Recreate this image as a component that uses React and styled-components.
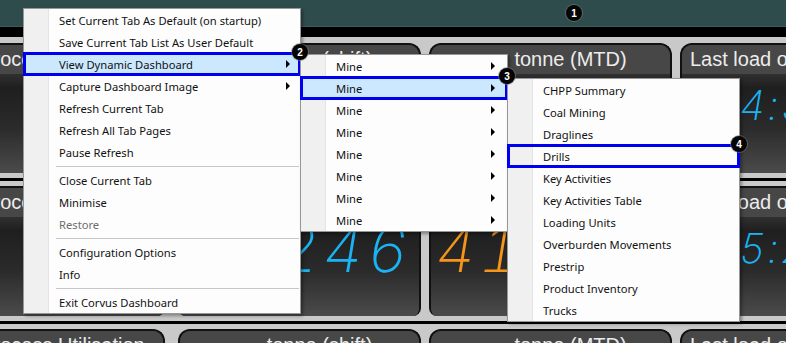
import React from "react";
import styled, { createGlobalStyle } from "styled-components";

const GlobalStyle = createGlobalStyle`
  html, body {
    margin: 0;
    padding: 0;
  }
  body {
    background: #c9c9c9;
    overflow: hidden;
  }
`;

const mainItems = [
  { label: "Set Current Tab As Default (on startup)" },
  { label: "Save Current Tab List As User Default" },
  { label: "View Dynamic Dashboard", sub: true, active: true, marked: "2" },
  { label: "Capture Dashboard Image", sub: true },
  { label: "Refresh Current Tab" },
  { label: "Refresh All Tab Pages" },
  { label: "Pause Refresh" },
  { sep: true },
  { label: "Close Current Tab" },
  { label: "Minimise" },
  { label: "Restore", disabled: true },
  { sep: true },
  { label: "Configuration Options" },
  { label: "Info" },
  { sep: true },
  { label: "Exit Corvus Dashboard" },
];

const mineItems = Array.from({ length: 8 }, (_, i) => ({
  label: "Mine",
  sub: true,
  active: i === 1,
  marked: i === 1 ? "3" : null,
}));

const dashboardItems = [
  "CHPP Summary",
  "Coal Mining",
  "Draglines",
  "Drills",
  "Key Activities",
  "Key Activities Table",
  "Loading Units",
  "Overburden Movements",
  "Prestrip",
  "Product Inventory",
  "Trucks",
].map((label) => ({ label, marked: label === "Drills" ? "4" : null }));

const rows = [
  { first: true, values: [null, null, null, { text: "4:32", kind: "time" }] },
  {
    values: [
      null,
      { text: "3246", kind: "big", color: "blue" },
      { text: "4180", kind: "big", color: "orange", left: true },
      { text: "5:26", kind: "time" },
    ],
  },
  { values: [null, null, null, null] },
];

const titles = ["Process Utilisation", "tonne (shift)", "tonne (MTD)", "Last load of shift"];

const Menu = ({ x, y, width, items, arrowGap }) => (
  <PopupMenu $x={x} $y={y} $w={width}>
    {items.map((item, i) =>
      item.sep ? (
        <MenuSeparator key={i} />
      ) : (
        <MenuItem
          key={i}
          $active={item.active}
          $marked={!!item.marked}
          $disabled={item.disabled}
        >
          {item.label}
          {item.sub && <SubArrow $gap={arrowGap} />}
          {item.marked && <Badge>{item.marked}</Badge>}
        </MenuItem>
      )
    )}
  </PopupMenu>
);

const App = () => {
  return (
    <Screen>
      <GlobalStyle />
      <TitleStrip>
        <Badge $free>1</Badge>
      </TitleStrip>

      {rows.map((row, r) => (
        <TileRow key={r} $first={row.first}>
          {titles.map((title, c) => {
            const value = row.values[c];
            return (
              <Tile key={c} $trim={c === 0}>
                <TileHeader $left={c === 3}>{title}</TileHeader>
                <TileBody>
                  {value && (
                    <Readout
                      $kind={value.kind}
                      $color={value.color}
                      $left={value.left || value.kind === "time"}
                    >
                      {value.text}
                    </Readout>
                  )}
                </TileBody>
              </Tile>
            );
          })}
        </TileRow>
      ))}

      <Menu x={23} y={8} width={278} items={mainItems} arrowGap={10} />
      <Menu x={300} y={54} width={208} items={mineItems} arrowGap={12} />
      <Menu x={507} y={78} width={233} items={dashboardItems} />
    </Screen>
  );
};

export default App;

const Screen = styled.div`
  position: relative;
  width: 786px;
  height: 343px;
  overflow: hidden;
  background: #c9c9c9;
  font-family: "Liberation Sans", Arial, sans-serif;
`;

const TitleStrip = styled.div`
  position: relative;
  height: 26px;
  background: #2f4c4d;
  border-bottom: 1px solid #3c5d5e;
`;

const TileRow = styled.div`
  display: grid;
  grid-template-columns: 250px 243px 243px 243px;
  column-gap: 8px;
  margin-left: -80px;
  border-top: ${(p) => (p.$first ? "10px" : "3px")} solid #000;
  padding: ${(p) => (p.$first ? "6px 0 5px" : "5px 0 5px")};
`;

const Tile = styled.div`
  height: 128px;
  margin-right: ${(p) => (p.$trim ? "5px" : "0")};
  border: 2px solid #111;
  border-bottom: 0;
  border-radius: 12px 12px 8px 8px;
  overflow: hidden;
  display: flex;
  flex-direction: column;
  background: #474747;
`;

const TileHeader = styled.div`
  height: 29px;
  flex-shrink: 0;
  display: flex;
  align-items: center;
  justify-content: ${(p) => (p.$left ? "flex-start" : "center")};
  padding-left: ${(p) => (p.$left ? "8px" : "40px")};
  color: #ececec;
  font-size: 20px;
  white-space: nowrap;
  background: #474747;
`;

const TileBody = styled.div`
  flex: 1;
  display: flex;
  background: linear-gradient(
    to bottom,
    #303030 0%,
    #1f1f1f 14%,
    #2b2b2b 55%,
    #4b4b4b 100%
  );
`;

const Readout = styled.div`
  flex: 1;
  display: flex;
  justify-content: ${(p) => (p.$left ? "flex-start" : "flex-end")};
  align-items: flex-start;
  font-family: Inter, "DejaVu Sans", sans-serif;
  font-weight: 200;
  font-style: italic;
  font-variant-numeric: tabular-nums;
  line-height: 1;
  white-space: nowrap;
  color: ${(p) => (p.$color === "orange" ? "#f5951a" : "#1ab4f4")};
  font-size: ${(p) => (p.$kind === "big" ? "63px" : "41px")};
  letter-spacing: ${(p) => (p.$kind === "big" ? "4px" : "2px")};
  padding: ${(p) =>
    p.$kind === "big"
      ? p.$left
        ? "1px 0 0 4px"
        : "1px 7px 0 0"
      : "11px 0 0 57px"};
`;

const PopupMenu = styled.ul`
  position: absolute;
  left: ${(p) => p.$x}px;
  top: ${(p) => p.$y}px;
  width: ${(p) => p.$w}px;
  box-sizing: border-box;
  margin: 0;
  padding: 0;
  list-style: none;
  border: 1px solid #979797;
  background: linear-gradient(
    to right,
    #f0f0f0 0,
    #f0f0f0 24px,
    #e4e4e4 24px,
    #e4e4e4 25px,
    #fdfdfd 25px
  );
  box-shadow: 2px 2px 3px rgba(0, 0, 0, 0.35);
  font-family: "Noto Sans", "Open Sans", sans-serif;
  font-size: 11.2px;
  color: #111;
`;

const MenuItem = styled.li`
  position: relative;
  height: 22px;
  display: flex;
  align-items: center;
  padding-left: 35px;
  white-space: nowrap;
  background: ${(p) => (p.$active ? "#cce8ff" : "transparent")};
  color: ${(p) => (p.$disabled ? "#6d6d6d" : "inherit")};
  outline: ${(p) => (p.$marked ? "3px solid #0000f0" : "none")};
  outline-offset: -2px;
`;

const SubArrow = styled.span`
  margin-left: auto;
  margin-right: ${(p) => p.$gap || 10}px;
  width: 0;
  height: 0;
  border-left: 4px solid #000;
  border-top: 4px solid transparent;
  border-bottom: 4px solid transparent;
`;

const MenuSeparator = styled.li`
  height: 1px;
  margin: 3px 1px 2px 32px;
  background: #c6c6c6;
`;

const Badge = styled.span`
  position: absolute;
  z-index: 5;
  ${(p) =>
    p.$free ? "left: 566px; top: 5px;" : "right: -8px; top: -9px;"}
  width: 16px;
  height: 16px;
  border-radius: 50%;
  background: #050505;
  box-shadow: 0 0 0 1px rgba(120, 120, 120, 0.6);
  color: #fff;
  font-family: "Liberation Sans", Arial, sans-serif;
  font-size: 10px;
  font-weight: bold;
  display: flex;
  align-items: center;
  justify-content: center;
`;
